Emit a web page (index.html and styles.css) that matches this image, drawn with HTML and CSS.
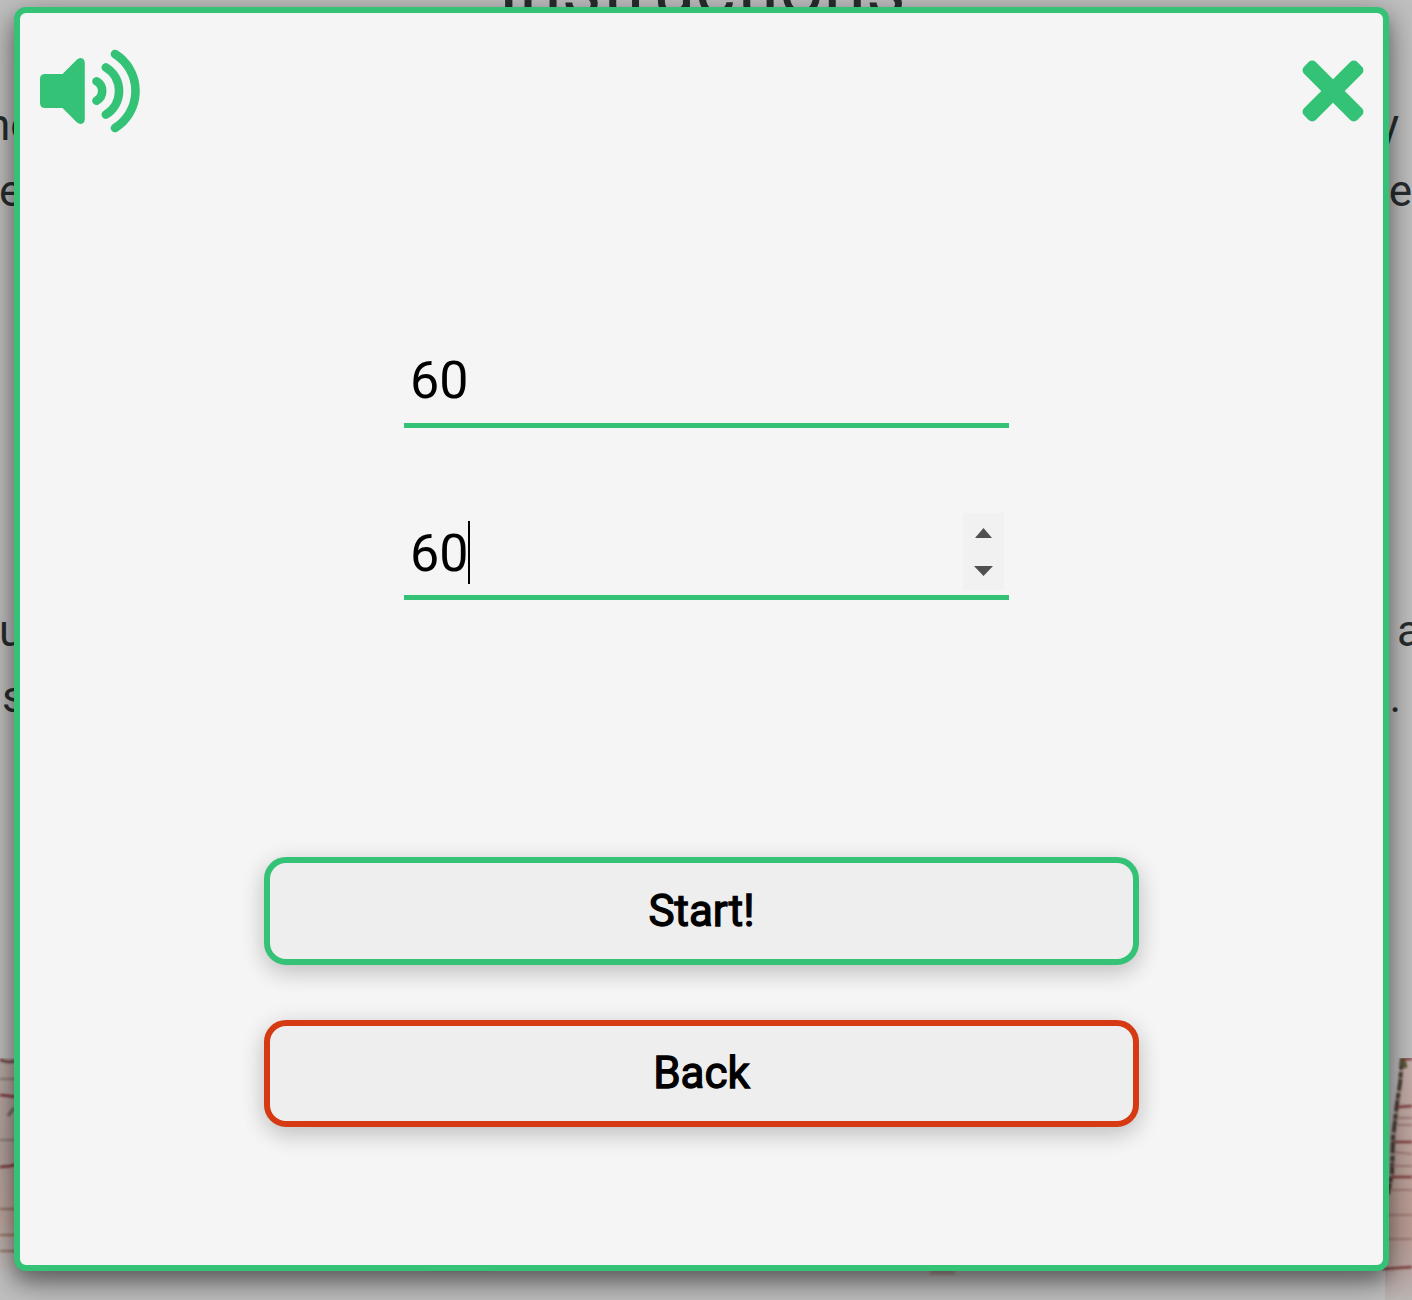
FILE: index.html
```html
<!DOCTYPE html>
<html lang="en">
<head>
<meta charset="utf-8">
<title>Instructions</title>
<link rel="stylesheet" href="styles.css">
</head>
<body>
<main class="page">
  <h1 class="title">Instructions</h1>
  <div class="para first">
    <div class="line"><span class="l1">ne</span><span class="r1">y</span></div>
    <div class="line"><span class="l2">e</span><span class="r2">e</span></div>
  </div>
  <div class="para second">
    <div class="line"><span class="l3">u</span><span class="r3">a</span></div>
    <div class="line"><span class="l4">s</span><span class="r4">.</span></div>
  </div>
  <svg class="wood" viewBox="0 0 1412 242" width="1412" height="242">
    <defs>
      <linearGradient id="fade" x1="0" y1="0" x2="0" y2="1">
        <stop offset="0" stop-color="#b9aaa6"/><stop offset=".45" stop-color="#b5a49e"/><stop offset=".75" stop-color="#bfa79f"/><stop offset="1" stop-color="#c1c0c0"/>
      </linearGradient>
      <linearGradient id="pink" x1="0" y1="0" x2="0" y2="1">
        <stop offset="0" stop-color="#c4afab"/><stop offset=".7" stop-color="#bb9d94"/><stop offset=".88" stop-color="#baa7a3"/><stop offset="1" stop-color="#bcb6b4"/>
      </linearGradient>
      <filter id="soft" filterUnits="userSpaceOnUse" x="-20" y="-20" width="1460" height="280"><feGaussianBlur stdDeviation="1.100"/></filter>
    </defs>
    <path fill="url(#fade)" d="M0 0h30v215H0z"/>
    <g fill="none" filter="url(#soft)">
      <path stroke="#6d3c42" stroke-width="2.500" d="M0 2l8 2 10-1"/>
      <path stroke="#806e6e" stroke-width="1.500" d="M0 21h18M0 82h18"/>
      <path stroke="#7b3237" stroke-width="2.500" d="M0 37l18 2M0 109l10-1 8-2"/>
      <path stroke="#77685f" stroke-width="3" d="M8 58l6-8"/>
      <path stroke="#96705f" stroke-width="2" d="M0 151h18M0 177h18M0 193h18"/>
    </g>
    <path fill="url(#pink)" d="M1401 0h11v242h-27v-90l7-35 4-70z"/>
    <g fill="none" filter="url(#soft)">
      <path stroke="#4a3c36" stroke-width="4" stroke-dasharray="12 2 6 1" d="M1402 0l-2 25-3 20-4 35-1 34-4 22"/>
      <path stroke="#5b5836" stroke-width="5" d="M1403 2l2 8"/>
      <path stroke="#7f3c3c" stroke-width="2.500" d="M1394 84h18M1398 49l14-1M1390 119h22M1403 1h9M1382 211l30-2"/>
      <path stroke="#967069" stroke-width="1.500" d="M1398 60h14M1397 67h15M1394 94l18 2M1392 108h20M1389 132h23M1388 157h24M1388 181h24"/>
    </g>
    <path fill="#986d66" opacity=".4" filter="url(#soft)" d="M930 209h25v8h-25zM430 209h60v4h-60z"/>
  </svg>
</main>

<section class="modal">
  <header class="bar">
    <svg class="sound" viewBox="0 0 101 84" width="101" height="84">
      <path fill="currentColor" d="M5 25h17.500L37 10.500Q40 7.800 43 9.800Q44.800 11 44.800 14V70Q44.800 73 43 74.300Q40 76 37 73.500L22.500 59H5Q0 59 0 54V30Q0 25 5 25z"/>
      <g fill="none" stroke="currentColor" stroke-width="8.600" stroke-linecap="round">
        <path d="M56.500 32.300A11.100 11.100 0 0 1 56.500 51.700"/>
        <path d="M65.800 18.400A27.600 27.600 0 0 1 65.800 65.600"/>
        <path d="M75 5A43.600 43.600 0 0 1 75 79"/>
      </g>
    </svg>
    <svg class="close" viewBox="-31 -31 62 62" width="62" height="62">
      <g fill="currentColor" transform="rotate(45)">
        <rect x="-37.700" y="-8.300" width="75.400" height="16.600" rx="5"/>
        <rect x="-8.300" y="-37.700" width="16.600" height="75.400" rx="5"/>
      </g>
    </svg>
  </header>
  <form class="fields">
    <div class="field"><input class="value" type="text" value="60" aria-label="Work"></div>
    <div class="field">
      <input class="value focused" type="text" value="60" aria-label="Rest">
      <span class="caret"></span>
      <span class="spinner">
        <svg viewBox="0 0 41 77" width="41" height="77"><path fill="#505050" d="M12 25L20.500 15L29 25zM11 53h19L20.500 63z"/></svg>
      </span>
    </div>
  </form>
  <div class="actions">
    <button class="btn start">Start!</button>
    <button class="btn back">Back</button>
  </div>
</section>
</body>
</html>
```
FILE: styles.css
```css
* { box-sizing: border-box; }

body {
  margin: 0;
  height: 1300px;
  overflow: hidden;
  background: #c1c0c0;
  font-family: Roboto, "Liberation Sans", sans-serif;
  color: #282d2d;
}

.page {
  height: 1300px;
  display: flex;
  flex-direction: column;
  overflow: hidden;
}

.title {
  flex: none;
  margin: -56px 0 0;
  padding-right: 8px;
  height: 90px;
  line-height: 90px;
  font-size: 77px;
  font-weight: 400;
  text-align: center;
}

.para { font-size: 44px; line-height: 66px; }
.first { margin-top: 58px; }
.second { margin-top: 374px; }
.line { display: flex; justify-content: space-between; height: 66px; }
.l1 { margin-left: -14px; }
.l2 { margin-left: -1px; }
.l3 { margin-left: -1px; }
.l4 { margin-left: 2px; }
.r1 { margin-right: 13px; }
.r3 { margin-right: -9px; }
.r4 { margin-right: 11px; }
.wood { display: block; flex: none; margin-top: 328px; }

.modal {
  position: absolute;
  left: 14px;
  top: 7.300px;
  width: 1375px;
  height: 1264px;
  display: flex;
  flex-direction: column;
  align-items: center;
  border: 6px solid #34c376;
  border-radius: 12px;
  background: #f5f5f5;
  box-shadow: 0 10px 20px rgba(0, 0, 0, .35), 0 10px 38px rgba(0, 0, 0, .3);
}

.bar {
  width: 100%;
  height: 155px;
  padding: 0 19px 0 20px;
  display: flex;
  justify-content: space-between;
  align-items: center;
  color: #34c376;
}

.fields {
  margin-top: 169px;
  padding-left: 10px;
  display: flex;
  flex-direction: column;
  gap: 81px;
}

.field {
  position: relative;
  width: 605px;
  height: 91px;
  display: flex;
  justify-content: space-between;
  border-bottom: 5px solid #34c376;
}

.value {
  width: 500px;
  padding: 0 0 0 6px;
  border: 0;
  outline: 0;
  background: transparent;
  font: 400 52px/61px Roboto, "Liberation Sans", sans-serif;
  color: #000;
}

.focused { padding-top: 2px; }

.caret {
  position: absolute;
  left: 64px;
  top: 12px;
  width: 2px;
  height: 63px;
  background: #000;
}

.spinner {
  width: 41px;
  height: 77px;
  margin: 4px 5px 0 0;
  background: #f1f1f1;
}

.actions {
  margin-top: 257px;
  display: flex;
  flex-direction: column;
  gap: 55px;
}

.btn {
  width: 875px;
  height: 108px;
  padding: 0;
  border: 6px solid #34c376;
  border-radius: 22px;
  background: #eee;
  box-shadow: 0 8px 22px rgba(0, 0, 0, .16), 0 4px 28px rgba(0, 0, 0, .08);
  font: 400 44px/52px Roboto, "Liberation Sans", sans-serif;
  color: #000;
  -webkit-text-stroke: 1.300px #000;
}

.back { height: 107px; padding-bottom: 1px; border-color: #d63a12; }
```
